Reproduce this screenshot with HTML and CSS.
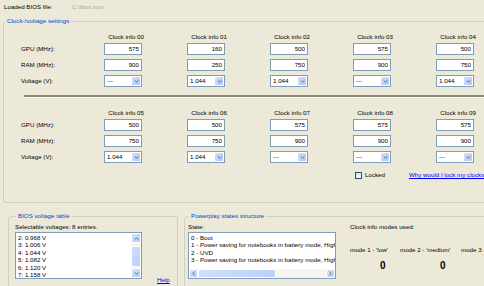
FILE: index.html
```html
<!DOCTYPE html>
<html lang="en">
<head>
  <meta charset="UTF-8">
  <title>Clock settings</title>
  <link rel="stylesheet" href="styles.css">
</head>
<body>

<div class="file-row">
  <span class="file-label">Loaded BIOS file:</span>
  <span class="file-path">C:\bios.rom</span>
</div>

<!-- Clock / voltage block -->
<fieldset class="group clock-group">
  <legend>Clock-/voltage settings</legend>
  <div class="clock-grid first" id="block1"></div>
  <div class="separator"></div>
  <div class="clock-grid second" id="block2"></div>
  <div class="lock-row">
    <span class="checkbox"></span>
    <span class="lock-label">Locked</span>
    <a class="link lock-link" href="#">Why would I lock my clocks?</a>
  </div>
</fieldset>

<div class="lower">
  <fieldset class="group bios-group">
    <legend>BIOS voltage table</legend>
    <div class="caption">Selectable voltages: 8 entries.</div>
    <div class="bios-row">
      <div class="listbox bios-list">
        <div class="list-items">
          <div>2: 0.968 V</div>
          <div>3: 1.006 V</div>
          <div>4: 1.044 V</div>
          <div>5: 1.082 V</div>
          <div>6: 1.120 V</div>
          <div>7: 1.158 V</div>
        </div>
        <div class="vscroll">
          <div class="sb-btn">
            <svg viewBox="0 0 7 5"><polyline points="1,4 3.5,1.5 6,4"/></svg>
          </div>
          <div class="sb-thumb v-thumb"></div>
          <div class="sb-space"></div>
          <div class="sb-btn">
            <svg viewBox="0 0 7 5"><polyline points="1,1 3.5,3.5 6,1"/></svg>
          </div>
        </div>
      </div>
      <a class="link help-link" href="#">Help</a>
    </div>
  </fieldset>

  <fieldset class="group pp-group">
    <legend>Powerplay states structure</legend>
    <div class="pp-row">
      <div class="pp-left">
        <div class="caption">State:</div>
        <div class="listbox pp-list">
          <div class="list-items">
            <div>0 - Boot</div>
            <div>1 - Power saving for notebooks in battery mode, High power for desktops</div>
            <div>2 - UVD</div>
            <div>3 - Power saving for notebooks in battery mode, High power for desktops</div>
          </div>
          <div class="hscroll">
            <div class="sb-btn">
              <svg viewBox="0 0 5 7"><polyline points="4,1 1.5,3.5 4,6"/></svg>
            </div>
            <div class="sb-thumb h-thumb"></div>
            <div class="sb-space"></div>
            <div class="sb-btn">
              <svg viewBox="0 0 5 7"><polyline points="1,1 3.5,3.5 1,6"/></svg>
            </div>
          </div>
        </div>
      </div>
      <div class="pp-right">
        <div class="caption">Clock info modes used:</div>
        <div class="modes">
          <span>mode 1 - 'low'</span>
          <span>mode 2 - 'medium'</span>
          <span>mode 3 - 'high'</span>
          <span class="count c1">0</span>
          <span class="count c2">0</span>
          <span class="count c3">0</span>
        </div>
      </div>
    </div>
  </fieldset>
</div>

<script>
  const blocks = [
    { id: 'block1', first: 0,
      gpu: [575, 160, 500, 575, 500],
      ram: [900, 250, 750, 900, 750],
      volt: ['---', '1.044', '1.044', '---', '1.044'] },
    { id: 'block2', first: 5,
      gpu: [500, 500, 575, 575, 575],
      ram: [750, 750, 900, 900, 900],
      volt: ['1.044', '1.044', '---', '---', '---'] }
  ];

  const dropBtn = `<span class="drop"><svg viewBox="0 0 7 5"><polyline points="1,1 3.5,3.5 6,1"/></svg></span>`;

  blocks.forEach(b => {
    let html = '<span></span>';
    for (let i = 0; i < 5; i++) {
      html += `<span class="col-head">Clock info 0${b.first + i}</span>`;
    }
    html += '<span class="row-label">GPU (MHz):</span>';
    html += b.gpu.map(v => `<div class="num">${v}</div>`).join('');
    html += '<span class="row-label">RAM (MHz):</span>';
    html += b.ram.map(v => `<div class="num">${v}</div>`).join('');
    html += '<span class="row-label">Voltage (V):</span>';
    html += b.volt.map(v => `<div class="combo"><span>${v}</span>${dropBtn}</div>`).join('');
    document.getElementById(b.id).innerHTML = html;
  });
</script>

</body>
</html>
```

FILE: styles.css
```css
body {
  margin: 0;
  width: 484px;
  height: 286px;
  overflow: hidden;
  background: #ECE9D8;
  font-family: "Liberation Sans", Arial, sans-serif;
  font-size: 6.2px;
  line-height: 8px;
  color: #000;
}

/* Top line */
.file-row {
  display: flex;
  padding: 3px 0 0 4px;
  height: 8px;
}

.file-label { width: 68px; }
.file-path { color: #ACA899; }

/* XP style group boxes */
.group {
  margin: 0;
  padding: 0;
  min-width: 0;
  border: 1px solid #D0D0BF;
  border-radius: 3px;
}

.group legend {
  color: #0046D5;
  padding: 0 2px;
  margin-left: 1px;
  line-height: 8px;
}

.clock-group {
  margin: 6px 0 0 3px;
  width: 530px;
  box-sizing: border-box;
  padding-bottom: 23px;
}

.clock-grid {
  display: grid;
  grid-template-columns: repeat(6, 38px);
  grid-template-rows: 8px 16px 16px 16px;
  column-gap: 45px;
  align-items: center;
  padding-left: 17px;
}

.clock-grid.first { margin-top: 8px; }
.clock-grid.second { margin-top: 11px; }

.col-head {
  display: flex;
  justify-content: flex-end;
  white-space: nowrap;
  margin-right: -2px;
}

.row-label { white-space: nowrap; }

.num,
.combo {
  height: 12px;
  box-sizing: border-box;
  border: 1px solid #7F9DB9;
  background: #fff;
  line-height: 10px;
}

.num {
  text-align: right;
  padding-right: 2px;
}

.combo {
  display: flex;
  align-items: center;
  justify-content: space-between;
  padding-left: 2px;
}

.drop {
  width: 8px;
  height: 8px;
  margin-right: 1px;
  border-radius: 1px;
  background: linear-gradient(135deg, #D4E1FD, #AFC4F6);
  display: flex;
  align-items: center;
  justify-content: center;
}

.drop svg,
.sb-btn svg {
  width: 5px;
  height: 5px;
  fill: none;
  stroke: #4D6185;
  stroke-width: 1.3;
}

.separator {
  margin: 6px 0 0 20px;
  border-top: 2px solid #8C8A80;
  border-bottom: 1px solid #fff;
}

.lock-row {
  display: flex;
  align-items: center;
  margin-top: 6px;
  padding-left: 351px;
  white-space: nowrap;
}

.checkbox {
  width: 7px;
  height: 7px;
  box-sizing: border-box;
  border: 1px solid #1C5180;
  background: linear-gradient(135deg, #DCDCD7, #fff);
}

.lock-label { margin-left: 3px; }

.link {
  color: #0000FF;
  text-decoration: underline;
}

.lock-link { margin-left: 24px; }

/* Lower part */
.lower {
  display: flex;
  gap: 6px;
  margin: 9px 0 0 8px;
}

.bios-group {
  flex-shrink: 0;
  width: 170px;
  height: 100px;
  box-sizing: border-box;
  padding: 3px 0 0 6px;
}

.pp-group {
  flex-shrink: 0;
  width: 330px;
  height: 100px;
  box-sizing: border-box;
  padding: 3px 0 0 3px;
}

.bios-row {
  display: flex;
  align-items: flex-end;
}

.listbox {
  margin-top: 1px;
  height: 47px;
  box-sizing: border-box;
  border: 1px solid #7F9DB9;
  background: #fff;
  display: flex;
  overflow: hidden;
}

.list-items {
  flex: 1;
  min-width: 0;
  padding: 1px 0 0 2px;
  line-height: 7.4px;
  white-space: nowrap;
  overflow: hidden;
}

.bios-list { width: 127px; }

.pp-list {
  width: 148px;
  flex-direction: column;
}

.help-link {
  margin: 0 0 -5px 15px;
}

/* Scroll bars */
.vscroll {
  width: 10px;
  display: flex;
  flex-direction: column;
  background: #F6F5F0;
}

.hscroll {
  height: 9px;
  display: flex;
  background: #F6F5F0;
}

.sb-btn {
  width: 10px;
  height: 10px;
  box-sizing: border-box;
  border: 1px solid #fff;
  border-radius: 2px;
  background: linear-gradient(135deg, #D7E3FD, #B6CAF7);
  display: flex;
  align-items: center;
  justify-content: center;
  flex-shrink: 0;
}

.hscroll .sb-btn {
  width: 9px;
  height: 9px;
}

.sb-thumb {
  box-sizing: border-box;
  border: 1px solid #fff;
  border-radius: 2px;
  background: linear-gradient(135deg, #D2DFFD, #BCCFF9);
}

.v-thumb {
  margin-top: 3px;
  height: 21px;
}

.h-thumb { width: 78px; }

.sb-space { flex: 1; }

.pp-row { display: flex; }

.pp-right { margin-left: 14px; }

.modes {
  display: grid;
  grid-template-columns: 50px 61px 60px;
  grid-template-rows: 8px 12px;
  row-gap: 6px;
  margin-top: 15px;
  white-space: nowrap;
}

.count {
  font-size: 10px;
  font-weight: bold;
  line-height: 12px;
}

.c1 { padding-left: 30px; }
.c2 { padding-left: 40px; }
.c3 { padding-left: 40px; }
```
